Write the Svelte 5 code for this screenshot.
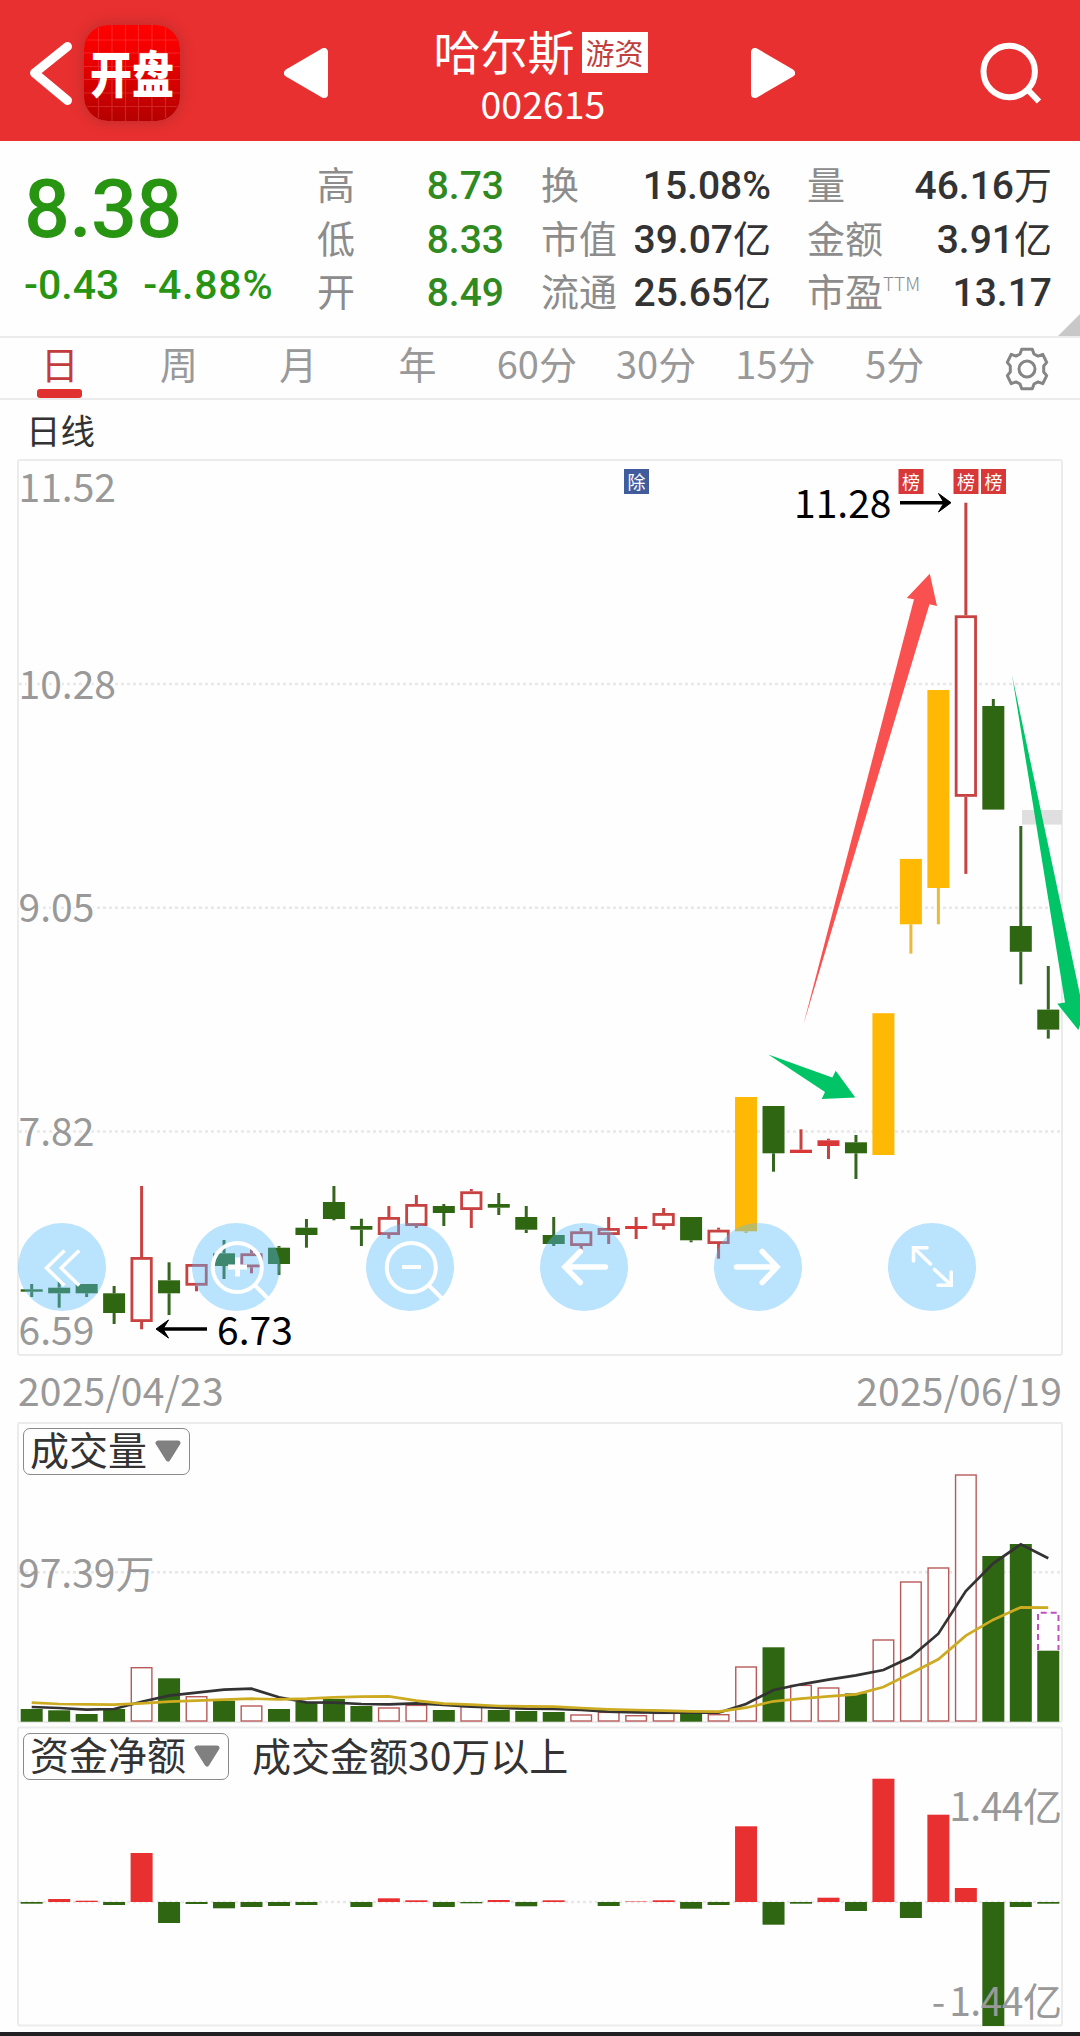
<script lang="ts">
  type Kind = "up" | "down" | "limit";

  const step = 27.475;
  const firstX = 31.7;
  const barWidth = 22;
  const zeroY = 1902;
  const volumeBase = 1721.7;

  let activeTab = $state("日");
  const tabs = ["日", "周", "月", "年", "60分", "30分", "15分", "5分"];

  const priceStats = [
    { label: "高", value: "8.73" },
    { label: "低", value: "8.33" },
    { label: "开", value: "8.49" },
  ];
  const marketStats = [
    { label: "换", value: "15.08%", unit: "" },
    { label: "市值", value: "39.07", unit: "亿" },
    { label: "流通", value: "25.65", unit: "亿" },
  ];
  const tradeStats = [
    { label: "量", sup: "", value: "46.16", unit: "万" },
    { label: "金额", sup: "", value: "3.91", unit: "亿" },
    { label: "市盈", sup: "TTM", value: "13.17", unit: "" },
  ];

  // kind, high, body top, body bottom, low
  const candles: [Kind, number, number, number, number][] = [
    ["down", 1284, 1289.3, 1291.7, 1297],
    ["down", 1281.7, 1287.7, 1293.3, 1307.7],
    ["down", 1284, 1284, 1293.3, 1297],
    ["down", 1286, 1293.3, 1313, 1324],
    ["up", 1186, 1257, 1322, 1329.3],
    ["down", 1262.3, 1280.3, 1293.3, 1315],
    ["up", 1264, 1264, 1285.7, 1291.3],
    ["down", 1240, 1253.3, 1266, 1279],
    ["up", 1249.3, 1253.3, 1267.3, 1273.3],
    ["down", 1246, 1247.7, 1264, 1275],
    ["down", 1219, 1227.7, 1235, 1247.7],
    ["down", 1186, 1202, 1219, 1220.3],
    ["down", 1218.7, 1226, 1229.7, 1246],
    ["up", 1206, 1217, 1235, 1238.7],
    ["up", 1195, 1204, 1226, 1228],
    ["down", 1204, 1206, 1213, 1226],
    ["up", 1189, 1191.3, 1210, 1228],
    ["down", 1193, 1204, 1207.7, 1215],
    ["down", 1206, 1217, 1229.7, 1233],
    ["down", 1217, 1235, 1244, 1246],
    ["up", 1228, 1231.3, 1246, 1250],
    ["up", 1217, 1228, 1235, 1244],
    ["up", 1217, 1226, 1229, 1239],
    ["up", 1208, 1213, 1226, 1229.7],
    ["down", 1217, 1217, 1240.3, 1242.3],
    ["up", 1227.7, 1229.7, 1244, 1258.7],
    ["limit", 1097, 1097, 1231.3, 1233],
    ["down", 1106, 1106, 1153.3, 1171.7],
    ["up", 1129.3, 1149.7, 1153, 1153],
    ["up", 1138.7, 1140.3, 1146, 1159],
    ["down", 1135, 1142.3, 1153.3, 1179],
    ["limit", 1013.2, 1013.2, 1155, 1155],
    ["limit", 858.9, 858.9, 924.3, 953.6],
    ["limit", 690, 690, 888, 924.3],
    ["up", 502.7, 615.3, 796.8, 873.9],
    ["down", 699, 706, 809.6, 809.6],
    ["down", 826, 926, 951.8, 984.3],
    ["down", 966, 1009.6, 1029.6, 1038.6],
  ];

  const volumeTops = [
    1709, 1710.3, 1714, 1709, 1667, 1678.3, 1696, 1700.7, 1705.3, 1709, 1702,
    1699, 1706, 1707.3, 1704.7, 1710, 1706, 1710, 1711, 1712, 1714.3, 1711.7,
    1715, 1712.7, 1712.7, 1714, 1666.3, 1647.3, 1684.7, 1687.3, 1693.3, 1639.3,
    1581.3, 1567.3, 1474.3, 1556, 1544, 1650.7,
  ];

  const fastAverage = [
    1707, 1708, 1709.7, 1709, 1701.7, 1695.7, 1692.7, 1689.7, 1688.7, 1697.3,
    1702.3, 1702.7, 1704, 1704.3, 1703.3, 1705, 1706.7, 1707.7, 1708.7, 1709,
    1710, 1711.7, 1712.3, 1712.7, 1712.7, 1712.7, 1704, 1690, 1684.3, 1679.7,
    1675.3, 1670, 1657, 1633.7, 1591, 1563.3, 1544.3, 1558.3,
  ];

  const slowAverage = [
    1702.7, 1704, 1704.3, 1704.7, 1703.3, 1701.7, 1700.7, 1699.7, 1698.7,
    1699.3, 1698.7, 1697.3, 1696.7, 1696.3, 1700.7, 1703.7, 1704.7, 1706,
    1706.3, 1706.7, 1708, 1709.3, 1710, 1710.7, 1711.3, 1711.7, 1707.7, 1701.3,
    1698.7, 1696.3, 1694.3, 1687, 1673.3, 1659.3, 1635.7, 1619.7, 1607.3,
    1607.7,
  ];

  // bar end relative to the zero line, positive is inflow
  const funds = [
    -1.7, 3, 1.3, -3, 49, -21, -2, -6.3, -5, -4, -3, 0, -5, 3.7, 1.7, -5, -1.3,
    2, -4.3, 1.7, 0, -4, 0.5, 1.7, -6.7, -3, 75.7, -22.7, -1.7, 4.3, -9, 123.3,
    -16, 87.3, 14, -124, -5, -1.7,
  ];

  const priceGrid = [
    { y: 684, text: "10.28" },
    { y: 907.7, text: "9.05" },
    { y: 1131.5, text: "7.82" },
  ];

  const badges = [
    { x: 624, text: "除", type: "ex" },
    { x: 898.5, text: "榜", type: "rank" },
    { x: 953.5, text: "榜", type: "rank" },
    { x: 981, text: "榜", type: "rank" },
  ];

  function centerX(i: number) {
    return firstX + step * i;
  }

  function toPoints(values: number[]) {
    return values.map((y, i) => `${centerX(i)},${y}`).join(" ");
  }
</script>

<div class="page">
  <header>
    <svg class="back" width="84" height="141" viewBox="0 0 84 141">
      <path d="M67.500 46.500 L34.500 73 L67.500 100.500" />
    </svg>
    <svg class="logo" width="96" height="96" viewBox="0 0 96 96">
      <defs>
        <linearGradient id="logo-bg" x1="0" y1="0" x2="0" y2="1">
          <stop offset="0" stop-color="#ff0000" />
          <stop offset="0.25" stop-color="#f40000" />
          <stop offset="1" stop-color="#b40000" />
        </linearGradient>
      </defs>
      <rect width="96" height="96" rx="24" fill="url(#logo-bg)" />
      <path
        class="logo-grid"
        d="M14.500 3V93 M28 0V96 M41.500 0V96 M54.500 0V96 M68 0V96 M81.500 3V93 M3 15H93 M0 28H96 M0 41.500H96 M0 54.500H96 M0 68H96 M3 81.500H93"
      />
      <text x="6" y="56.500" textLength="84" transform="scale(1 1.2)">开盘</text>
    </svg>
    <svg class="arrow prev" width="44" height="50" viewBox="0 0 44 50">
      <path d="M40 4 V46 L4 25 Z" />
    </svg>
    <div class="title">
      <div class="name"><span>哈尔斯</span><em>游资</em></div>
      <div class="code">002615</div>
    </div>
    <svg class="arrow" width="44" height="50" viewBox="0 0 44 50">
      <path d="M4 4 V46 L40 25 Z" />
    </svg>
    <svg class="search" width="66" height="66" viewBox="0 0 66 66">
      <circle cx="31.200" cy="31.500" r="25.700" />
      <path d="M50 50 L61 61.500" />
    </svg>
  </header>

  <section class="quote">
    <div class="now">
      <div class="price">8.38</div>
      <div class="change"><span>-0.43</span><span class="percent">-4.88%</span></div>
    </div>
    <div class="stats green">
      {#each priceStats as s}
        <div class="row"><span>{s.label}</span><b>{s.value}</b></div>
      {/each}
    </div>
    <div class="stats market">
      {#each marketStats as s}
        <div class="row"><span>{s.label}</span><b>{s.value}<i>{s.unit}</i></b></div>
      {/each}
    </div>
    <div class="stats trade">
      {#each tradeStats as s}
        <div class="row">
          <span>{s.label}{#if s.sup}<sup>{s.sup}</sup>{/if}</span>
          <b>{s.value}<i>{s.unit}</i></b>
        </div>
      {/each}
    </div>
    <div class="corner"></div>
  </section>

  <nav>
    {#each tabs as tab}
      <button class:active={tab === activeTab} onclick={() => (activeTab = tab)}>
        {tab}
      </button>
    {/each}
    <svg class="gear" width="44" height="44" viewBox="-22 -22 44 44">
      <path
        d="M-5.300 -19.700 H5.300 L7 -15 L11 -12.900 L15.800 -14.700 L19.700 -6.600 L16.700 -3 V3 L19.700 6.600 L15.800 14.700 L11 12.900 L7 15 L5.300 19.700 H-5.300 L-7 15 L-11 12.900 L-15.800 14.700 L-19.700 6.600 L-16.700 3 V-3 L-19.700 -6.600 L-15.800 -14.700 L-11 -12.900 L-7 -15 Z"
      />
      <circle r="8" />
    </svg>
  </nav>

  <div class="chart-name">日线</div>

  <div class="panel">
    <svg width="1080" height="898" viewBox="0 458 1080 898">
      <rect class="frame" x="18" y="460" width="1044" height="895" rx="2" />
      <text class="label" x="18.500" y="501.500">11.52</text>
      {#each priceGrid as g}
        <line class="grid" x1="19" x2="1061" y1={g.y} y2={g.y} />
        <text class="label outlined" x="18.500" y={g.y + 14.5}>{g.text}</text>
      {/each}
      <text class="label" x="18.500" y="1345">6.59</text>
      <rect x="1022" y="810" width="40" height="14.600" fill="#dfdfdf" />

      {#each candles as [kind, high, top, bottom, low], i}
        {@const x = centerX(i)}
        <g class={kind}>
          {#if high < top}
            <line x1={x} x2={x} y1={high} y2={top} />
          {/if}
          {#if low > bottom}
            <line x1={x} x2={x} y1={bottom} y2={low} />
          {/if}
          {#if kind === "up" && bottom - top > 6}
            <rect
              class="hollow"
              x={x - 9.7}
              y={top + 1.4}
              width="19.400"
              height={bottom - top - 2.8}
            />
          {:else}
            <rect x={x - 11} y={top} width={barWidth} height={bottom - top} />
          {/if}
        </g>
      {/each}

      {#each badges as b}
        <rect class={b.type} x={b.x} y="469" width="25" height="25" />
        <text class="badge" x={b.x + 12.5} y="488.500">{b.text}</text>
      {/each}

      <text class="extreme" x="794" y="518">11.28</text>
      <path class="pointer" d="M900 502.700 H947" />
      <path class="pointer-head" d="M938.500 493.500 L951 502.700 L938.500 512 L944 502.700 Z" />
      <text class="extreme" x="217" y="1345">6.73</text>
      <path class="pointer" d="M207 1329 H160" />
      <path class="pointer-head" d="M168.500 1320 L156 1329 L168.500 1338 L163 1329 Z" />

      <polygon
        fill="#f95150"
        points="929.800,573.700 906.700,598 914,599.300 803.300,1025 929.500,604.300 937,606"
      />
      <polygon
        fill="#00c466"
        points="768.300,1054.600 832.300,1077.500 835.700,1070.700 855.300,1097.500 821.700,1099 825,1092"
      />
      <polygon
        fill="#00c466"
        points="1012,675 1065,1002.500 1057.300,1003.800 1078.300,1030 1090,997 1080.500,997"
      />
    </svg>

    <div class="tools">
      <button aria-label="展开">
        <svg viewBox="-44 -44 88 88">
          <path class="thin" d="M2.500 -16.500 L-15.500 1 L2.500 18.500 M17.200 -16.500 L-0.800 1 L17.200 18.500" />
        </svg>
      </button>
      <button aria-label="放大">
        <svg viewBox="-44 -44 88 88">
          <circle cx="1.300" cy="0.500" r="24.500" />
          <path d="M18.500 18 L32 31.500" />
          <path class="plus" d="M-8 0 H11 M1.500 -9.500 V9.500" />
        </svg>
      </button>
      <button aria-label="缩小">
        <svg viewBox="-44 -44 88 88">
          <circle cx="1.300" cy="0.500" r="24.500" />
          <path d="M18.500 18 L32 31.500 M-8 0 H11" />
        </svg>
      </button>
      <button aria-label="左移">
        <svg viewBox="-44 -44 88 88">
          <path class="round" d="M21.500 0 H-18 M-3.700 -15.500 L-19 0 L-3.700 15.500" />
        </svg>
      </button>
      <button aria-label="右移">
        <svg viewBox="-44 -44 88 88">
          <path class="round" d="M-21.500 0 H18 M4.200 -15.500 L19 0 L4.200 15.500" />
        </svg>
      </button>
      <button aria-label="全屏">
        <svg viewBox="-44 -44 88 88">
          <path
            class="thin capped"
            d="M-1.500 -3 L-18 -19 M-5 -19.300 H-18.500 V-6 M2.500 2.500 L19 18 M19.200 5 V18.300 H6"
          />
        </svg>
      </button>
    </div>
  </div>

  <div class="dates"><span>2025/04/23</span><span>2025/06/19</span></div>

  <div class="panel">
    <svg width="1080" height="303" viewBox="0 1422 1080 303">
      <rect class="frame" x="18" y="1423" width="1044" height="299" rx="2" />
      <line class="grid" x1="19" x2="1061" y1="1572.300" y2="1572.300" />
      <text class="label" x="18" y="1588">97.39万</text>
      {#each volumeTops as top, i}
        {@const x = centerX(i)}
        {#if candles[i][0] === "down"}
          <rect
            class="volume-down"
            x={x - 11}
            y={top}
            width={barWidth}
            height={volumeBase - top}
          />
        {:else}
          <rect
            class="volume-up"
            x={x - 10.3}
            y={top + 0.7}
            width="20.600"
            height={volumeBase - top - 1.4}
          />
        {/if}
      {/each}
      <path class="forecast" d="M1038 1650 V1612.700 H1058.500 V1650" />
      <polyline class="fast" points={toPoints(fastAverage)} />
      <polyline class="slow" points={toPoints(slowAverage)} />
    </svg>
    <div class="picker">
      <button>
        <span>成交量</span>
        <svg width="26" height="22" viewBox="0 0 26 22"><path d="M3 3 H23 L13 19 Z" /></svg>
      </button>
    </div>
  </div>

  <div class="panel">
    <svg width="1080" height="307" viewBox="0 1725 1080 307">
      <rect class="frame" x="18" y="1727.500" width="1044" height="298" rx="2" />
      <line class="grid" x1="19" x2="1061" y1={zeroY} y2={zeroY} />
      {#each funds as value, i}
        <rect
          class={value > 0 ? "inflow" : "outflow"}
          x={centerX(i) - 11}
          y={value > 0 ? zeroY - value : zeroY}
          width={barWidth}
          height={Math.abs(value)}
        />
      {/each}
      <text class="label right" x="1061.500" y="1820.500">1.44亿</text>
      <text class="label right" x="1061.500" y="2015.500"><tspan class="minus">-</tspan>1.44亿</text>
    </svg>
    <div class="picker funds">
      <button>
        <span>资金净额</span>
        <svg width="26" height="22" viewBox="0 0 26 22"><path d="M3 3 H23 L13 19 Z" /></svg>
      </button>
      <span>成交金额30万以上</span>
    </div>
  </div>

  <div class="bottom-edge"></div>
</div>

<style>
  :global(body) {
    background: #fefefe;
  }

  .page {
    width: 1080px;
    height: 2036px;
    overflow: hidden;
    display: flex;
    flex-direction: column;
    font-family: "Noto Sans CJK SC", sans-serif;
    color: #333;
  }

  svg {
    display: block;
    flex: none;
  }

  button {
    font: inherit;
    color: inherit;
    border: none;
    background: none;
    padding: 0;
  }

  header {
    height: 141px;
    flex: none;
    display: flex;
    align-items: center;
    background: #e83030;
    color: #fff;
  }

  .back path {
    fill: none;
    stroke: #fff;
    stroke-width: 9;
    stroke-linecap: round;
    stroke-linejoin: round;
  }

  .logo {
    margin-top: 5px;
    border-radius: 24px;
    box-shadow: 0 0 14px rgba(110, 40, 40, 0.4);
  }

  .logo-grid {
    fill: none;
    stroke: rgba(255, 120, 120, 0.3);
    stroke-width: 1.2;
  }

  .logo text {
    font-size: 42px;
    font-weight: 900;
    fill: #fff;
  }

  .arrow {
    margin-top: 5px;
    fill: #fff;
    stroke: #fff;
    stroke-width: 8;
    stroke-linejoin: round;
  }

  .prev {
    margin-left: 104px;
  }

  .title {
    width: 423px;
    height: 141px;
    box-sizing: border-box;
    padding-top: 21px;
    display: flex;
    flex-direction: column;
    align-items: center;
  }

  .name {
    height: 58px;
    display: flex;
    align-items: center;
    gap: 7px;
    font-size: 47px;
    line-height: 58px;
    margin-left: 2px;
  }

  .name em {
    height: 41px;
    width: 66px;
    margin-top: 4px;
    background: #fff;
    color: #c04040;
    font-size: 29px;
    line-height: 40px;
    font-style: normal;
    text-align: center;
  }

  .code {
    margin-left: 7px;
    font-size: 37.500px;
    line-height: 47px;
  }

  .search {
    margin-left: 183px;
    fill: none;
    stroke: #fff;
    stroke-width: 6;
    margin-top: 5px;
  }

  .quote {
    position: relative;
    height: 197px;
    flex: none;
    box-sizing: border-box;
    border-bottom: 2px solid #ebebeb;
    display: flex;
    padding-top: 17px;
  }

  .now {
    width: 317px;
    box-sizing: border-box;
    padding: 5px 0 0 24px;
    font-family: Roboto, sans-serif;
    font-weight: 500;
    color: #279412;
  }

  .price {
    font-size: 81px;
    line-height: 94px;
    letter-spacing: -0.8px;
  }

  .change {
    display: flex;
    gap: 24px;
    font-size: 41px;
    line-height: 56px;
    white-space: nowrap;
  }

  .percent {
    letter-spacing: 0.8px;
  }

  .stats {
    display: flex;
    flex-direction: column;
    width: 187px;
    line-height: 54px;
    font-size: 38px;
  }

  .market {
    width: 230px;
    margin-left: 37px;
  }

  .trade {
    width: 245px;
    margin-left: 36px;
  }

  .row {
    height: 53.500px;
    display: flex;
    justify-content: space-between;
    white-space: nowrap;
    color: #8c8c8c;
  }

  .row span {
    margin-top: -2px;
  }

  .row b {
    margin-top: 1px;
    font-family: Roboto, "Noto Sans CJK SC", sans-serif;
    font-weight: 500;
    font-size: 39px;
    color: #333;
  }

  .green b {
    color: #308a20;
  }

  .row i {
    font-style: normal;
    font-weight: 400;
    font-size: 38px;
  }

  sup {
    font-size: 19px;
    line-height: 0;
    vertical-align: 15px;
    font-weight: 300;
  }

  .corner {
    position: absolute;
    right: 0;
    bottom: 0;
    width: 22px;
    height: 22px;
    background: #c8c8c8;
    clip-path: polygon(100% 0, 100% 100%, 0 100%);
  }

  nav {
    height: 62px;
    flex: none;
    box-sizing: border-box;
    border-bottom: 2px solid #ebebeb;
    display: flex;
  }

  nav button {
    width: 119.300px;
    display: flex;
    flex-direction: column;
    align-items: center;
    font-size: 38px;
    line-height: 50px;
    color: #999;
  }

  nav .active {
    color: #c23c3c;
  }

  nav .active::after {
    content: "";
    width: 45px;
    height: 9px;
    margin-top: 1px;
    border-radius: 3px;
    background: #e03030;
  }

  .gear {
    margin: 9px 0 0 50.400px;
    fill: none;
    stroke: #858585;
    stroke-width: 3;
    stroke-linejoin: round;
  }

  .chart-name {
    height: 58px;
    flex: none;
    padding-left: 26px;
    font-size: 34.500px;
    line-height: 58px;
  }

  .panel {
    position: relative;
    flex: none;
  }

  .frame {
    fill: none;
    stroke: #ebebeb;
    stroke-width: 2;
  }

  .grid {
    stroke: #e8e8e8;
    stroke-width: 2.600;
    stroke-dasharray: 3 3;
  }

  .label {
    font-size: 39px;
    fill: #999;
  }

  .outlined {
    paint-order: stroke;
    stroke: #fefefe;
    stroke-width: 4;
  }

  .right {
    text-anchor: end;
    letter-spacing: -0.5px;
  }

  .minus {
    letter-spacing: 4px;
  }

  .extreme {
    font-size: 39px;
    fill: #000;
  }

  .badge {
    font-size: 18px;
    fill: #fff;
    text-anchor: middle;
  }

  .ex {
    fill: #405c9c;
  }

  .rank {
    fill: #d83838;
  }

  .pointer {
    stroke: #000;
    stroke-width: 3.600;
  }

  .pointer-head {
    stroke: #000;
    stroke-width: 1;
  }

  .up line,
  .down line,
  .limit line {
    stroke-width: 3;
  }

  .up {
    stroke: #c84242;
    fill: #d83838;
  }

  .up rect:not(.hollow) {
    stroke: none;
  }

  .up .hollow {
    fill: #fefefe;
    stroke-width: 2.800;
  }

  .down {
    fill: #2f6612;
  }

  .down line {
    stroke: #36651f;
  }

  .limit {
    fill: #ffb904;
  }

  .limit line {
    stroke: #e9b93a;
  }

  .tools {
    position: absolute;
    left: 18px;
    top: 765px;
    display: flex;
    gap: 86px;
  }

  .tools button {
    width: 88px;
    height: 88px;
    border-radius: 50%;
    background: rgba(85, 187, 253, 0.4);
  }

  .tools svg {
    width: 88px;
    height: 88px;
    fill: none;
    stroke: #fff;
    stroke-width: 4;
  }

  .tools .plus {
    stroke-width: 5;
  }

  .tools .round {
    stroke-width: 5.500;
    stroke-linecap: round;
  }

  .tools .thin {
    stroke-width: 3.600;
  }

  .tools .capped {
    stroke-linecap: round;
  }

  .dates {
    height: 66px;
    flex: none;
    display: flex;
    justify-content: space-between;
    padding: 0 18px;
    font-size: 39px;
    line-height: 66px;
    letter-spacing: 0.2px;
    color: #999;
  }

  .volume-down,
  .outflow {
    fill: #2f6612;
  }

  .volume-up {
    fill: #fefefe;
    stroke: #b85a5a;
    stroke-width: 1.400;
  }

  .inflow {
    fill: #e83030;
  }

  .forecast {
    fill: none;
    stroke: #c050c0;
    stroke-width: 2;
    stroke-dasharray: 6 4;
  }

  .fast,
  .slow {
    fill: none;
    stroke: #333;
    stroke-width: 2.700;
  }

  .slow {
    stroke: #ccab20;
  }

  .picker {
    position: absolute;
    left: 23px;
    top: 6px;
    display: flex;
    align-items: center;
    gap: 23px;
    font-size: 39px;
    line-height: 44px;
    white-space: nowrap;
  }

  .funds {
    top: 8px;
  }

  .picker button {
    height: 47px;
    box-sizing: border-box;
    display: flex;
    align-items: center;
    gap: 8px;
    padding: 0 8px 2px 6px;
    border: 1.500px solid #8a8a8a;
    border-radius: 7px;
    background: #fefefe;
  }

  .picker span {
    margin-top: -5px;
  }

  .picker svg {
    fill: #808080;
    stroke: #808080;
    stroke-width: 5;
    stroke-linejoin: round;
  }

  .bottom-edge {
    height: 4px;
    flex: none;
    background: #222022;
  }
</style>
